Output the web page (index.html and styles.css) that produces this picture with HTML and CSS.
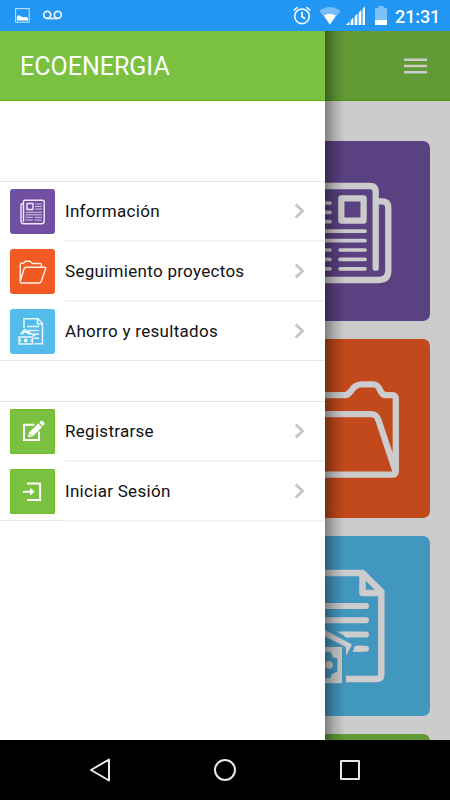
FILE: index.html
```html
<!DOCTYPE html>
<html lang="es">
<head>
<meta charset="utf-8">
<title>Ecoenergia</title>
<link rel="stylesheet" href="styles.css">
</head>
<body>
<div class="phone">
  <div class="status">
    <svg class="status-left" width="70" height="31" fill="none" stroke="#e6f3fe">
      <rect x="15.600" y="8.600" width="13.600" height="13.600" stroke="#b5dbfb" stroke-width="1.200"/>
      <path d="M17 20.500v-4l2-1.500 2 1.500 3 1 2-.8 2 1.500v2.300z" fill="#fff" stroke="none"/>
      <g stroke-width="1.700"><circle cx="47.200" cy="14.800" r="3.500"/><circle cx="57.800" cy="14.800" r="3.500"/><path d="M47 18.500h11"/></g>
    </svg>
    <svg class="status-right" width="100" height="31">
      <g fill="none" stroke="#fff" stroke-width="1.600"><circle cx="12" cy="16.300" r="7.300"/><path d="M12 11.800v5l3.200 2M3.600 10.500l4-3.300M20.400 10.500l-4-3.300"/></g>
      <path d="M29.200 11Q39.800 2.800 50.600 11L39.900 24.500z" fill="#74bdf9"/>
      <path d="M34 15.500Q39.900 12 45.800 15.500L39.900 24.500z" fill="#fff"/>
      <path d="M56 25L75 6.500V25z" fill="#79bff9"/>
      <path d="M56 25l3-3v3zM61 25v-5l2-2v7zM65 25v-9l2-2v11zM69 25V12.500l2-2V25zM73 25V8.500l2-2V25z" fill="#fff"/>
      <path d="M85 8h3.500V6h5v2H97v17H85z" fill="#7dc1f9"/>
      <path d="M85 20h12v5H85z" fill="#fff"/>
    </svg>
    <span class="clock">21:31</span>
  </div>

  <div class="app">
    <aside class="drawer">
      <header class="drawer-head">ECOENERGIA</header>
      <nav class="menu">
        <ul class="group">
          <li class="item">
            <span class="tile purple"><svg viewBox="0 0 45 45" fill="none" stroke="#eee9f5" stroke-width="1.400" stroke-linecap="round" stroke-linejoin="round"><path d="M13.500 32.200V12.800q0-1.500 1.500-1.500h17.500q1.700 0 1.700 1.500V32q0 2.700-2.700 2.700H14q-3 0-3-3V16q0-1.500 2.500-1.500"/><path d="M17 14.500h6v6h-6z"/><path stroke-width=".8" d="M25.500 15h6M25.500 17.500h6M25.500 20h6M16 23.300h15.500M16 25.800h15.500M16 28.300h6.500M25 28.300h6.500M16 31h6.500M25 31h6.500"/></svg></span>
            <span class="label">Información</span><svg class="chev" viewBox="0 0 12 16"><path d="M1.700 1.500L8.500 8l-6.800 6.500"/></svg>
          </li>
          <li class="item">
            <span class="tile orange"><svg viewBox="0 0 45 45" fill="none" stroke="#fff0e8" stroke-width="1.400" stroke-linejoin="round"><path d="M10.200 32V15.500q0-1.200 1.200-1.200h1.800c1.300 0 1-2 3-2h3c2 0 2 2.200 3.500 2.200h7.500q1.200 0 1.200 1.200v2.500M10.200 32.300l3.700-12.300q.6-1.800 2.500-1.800h18.200q1.500 0 1 1.500l-4.300 12.600q-.6 1.700-2.300 1.700H11.400q-1.500 0-1.200-1.700z"/></svg></span>
            <span class="label">Seguimiento proyectos</span><svg class="chev" viewBox="0 0 12 16"><path d="M1.700 1.500L8.500 8l-6.800 6.500"/></svg>
          </li>
          <li class="item">
            <span class="tile blue"><svg viewBox="0 0 45 45" fill="none" stroke="#e7f6fd" stroke-width="1.500"><path d="M14 19V9.800h14l4.500 4.700v20.300h-8M27.500 10v5h5M17 17.500h12M18 21.500h11M21 25.300h8M24 29.200h5"/><path d="M10.500 25.500l4-5L25 27M12.500 25l2.700-2.500 4.500 3"/><path d="M9 28h13.500v7H9z"/><circle cx="15.700" cy="31.500" r="2" fill="#e7f6fd" stroke="none"/><path d="M10.500 30v3M21 30v3" stroke-width="1"/></svg></span>
            <span class="label">Ahorro y resultados</span><svg class="chev" viewBox="0 0 12 16"><path d="M1.700 1.500L8.500 8l-6.800 6.500"/></svg>
          </li>
        </ul>
        <ul class="group">
          <li class="item">
            <span class="tile green"><svg viewBox="0 0 45 45"><path d="M24.500 15.800H14V31h15v-8.500" fill="none" stroke="#fff" stroke-width="2"/><path d="M18 28.300l1-4.800 9.300-8.900 3.700 3.700-9.200 9zM29.200 13.700l1.700-1.600q.8-.7 1.600 0l1.900 1.900q.8.800 0 1.600l-1.600 1.700z" fill="#fff"/><path d="M19.500 25l1.700 1.700" stroke="#7ac142"/></svg></span>
            <span class="label">Registrarse</span><svg class="chev" viewBox="0 0 12 16"><path d="M1.700 1.500L8.500 8l-6.800 6.500"/></svg>
          </li>
          <li class="item">
            <span class="tile green"><svg viewBox="0 0 45 45"><path d="M17 14.400h13.100v16.700H17M13 22.700h8" fill="none" stroke="#fff" stroke-width="2"/><path d="M20 18.800l4.700 3.900-4.700 3.900z" fill="#fff"/></svg></span>
            <span class="label">Iniciar Sesión</span><svg class="chev" viewBox="0 0 12 16"><path d="M1.700 1.500L8.500 8l-6.800 6.500"/></svg>
          </li>
        </ul>
      </nav>
    </aside>

    <main class="page">
      <header class="page-head"><svg width="23" height="16" fill="#ccc"><path d="M0 .5h23v2.500H0zM0 6.800h23v2.500H0zM0 13h23v2.500H0z"/></svg></header>
      <div class="cards">
        <div class="card c-purple"><svg viewBox="325 141 105 180" fill="none" stroke="#ccc" stroke-width="6.300" stroke-linecap="round"><path d="M320 186h50q5.700 0 5.700 5.700v76M376 201.300h6q6.300 0 6.300 6.300v63q0 9.400-9.400 9.400H320"/><path stroke-linejoin="round" d="M341.300 198.300h22.300v22.300h-22.300z"/><path stroke-width="3.700" d="M320 203h10M320 212.300h10M320 221.700h10M320 231.200h45M320 240.700h45M320 250h10M340 250h25M320 259.400h10M340 259.400h25M320 268.800h10M340 268.800h25"/></svg></div>
        <div class="card c-orange"><svg viewBox="325 339 105 180" fill="none" stroke="#ccc" stroke-width="6.300" stroke-linejoin="round"><path d="M320 395.200h25c7 0 6-10.900 17-10.900h11c9 0 5 10.900 13 10.900h6q3.800 0 3.800 3.800v72q0 3.700-3.700 3.700H320M320 414.200h51q5.500 0 7.300 5.500l17.400 52"/></svg></div>
        <div class="card c-blue"><svg viewBox="325 536.400 105 180" fill="none" stroke="#ccc" stroke-width="6.500"><path d="M320 573.400h42.500L381.300 592v83q0 4.500-4.500 4.500H346"/><path stroke-linejoin="round" d="M362.500 573v20.500H381"/><path stroke-linecap="round" stroke-width="6" d="M320 606.400h46M320 620.700h46M347 635h19M357 649.200h9"/><path fill="#ccc" stroke="none" d="M336.500 632h12v6h-1zM352.500 652.200l3-6h6v6zM325 630.500l27 14.500-6 11.500v-9l-21-10.500z"/><path fill="#ccc" stroke="none" fill-rule="evenodd" d="M325 647.300h17v36.400h-17v-5.200l5.500.2 1-4 5.800-2.500v-13.500l-4.500-1-2-5-5.800-.7z"/><circle cx="329" cy="665.300" r="3.800" fill="#ccc" stroke="none"/></svg></div>
        <div class="card c-green"></div>
      </div>
      <div class="shade"></div>
    </main>
  </div>

  <footer class="navbar">
    <svg width="450" height="60" fill="none" stroke="#e8e8e8" stroke-width="2" stroke-linejoin="round"><path d="M91 30l18-10.500v21z"/><circle cx="225" cy="30" r="10"/><path d="M341 21h18v18h-18z"/></svg>
  </footer>
</div>
</body>
</html>
```
FILE: styles.css
```css
* { box-sizing: border-box; }
body { margin: 0; font-family: Roboto, "Liberation Sans", sans-serif; }
svg { display: block; }
.phone { width: 450px; height: 800px; display: flex; flex-direction: column; overflow: hidden; background: #fff; }

.status { height: 31px; flex: none; display: flex; align-items: center; background: #2196f3; color: #fff; }
.status-right { margin-left: 220px; }
.clock { margin-left: 5px; padding-top: 3px; font-size: 18px; font-weight: 500; line-height: 28px; letter-spacing: -.1px; white-space: nowrap; }

.app { height: 709px; flex: none; display: flex; }
.drawer { width: 325px; flex: none; background: #fff; }
.drawer-head { height: 70px; padding-left: 20px; background: #7ac142; border-bottom: 1px solid #5fb50a; color: #fff; font-size: 25px; line-height: 72px; }
.menu { padding-top: 80px; }
.group { list-style: none; margin: 0 0 40px; padding: 0; box-shadow: inset 0 1px #e4e4e6, inset 0 -1px #e8e8ea; }
.item { height: 60px; padding: 0 20px 0 10px; display: flex; align-items: center; position: relative; color: #111; font-size: 17px; }
.item::after { content: ""; position: absolute; left: 65px; right: 0; bottom: -1px; height: 2px; background: #f2f2f4; }
.group:first-child .item:last-child::after { display: none; }
.tile { width: 45px; height: 45px; flex: none; border-radius: 2px; transform: translateY(.5px); }
.item .tile { transform: none; margin-bottom: -1px; align-self: flex-start; margin-top: 8px; }
.tile svg { width: 45px; height: 45px; }
.purple { background: #7150a3; border-radius: 3px; }
.orange { background: #f15a22; border-radius: 3px; }
.blue { background: #53bcea; border-radius: 3px; }
.green { background: #7ac142; box-shadow: inset 0 0 0 1px #70bf22; }
.label { margin-left: 10px; flex: 1; letter-spacing: .29px; white-space: nowrap; }
.chev { width: 12px; height: 16px; fill: none; stroke: #c7c7cc; stroke-width: 3; margin-right: -1px; }

.page { width: 125px; position: relative; background: #ccc; overflow: hidden; }
.page-head { height: 70px; background: #629b35; border-bottom: 1px solid #4e9508; display: flex; justify-content: flex-end; align-items: center; padding: 1px 23px 0 0; }
.cards { padding: 40px 20px 0 0; display: flex; flex-direction: column; gap: 18px; }
.card { height: 179.600px; flex: none; border-radius: 0 7px 7px 0; overflow: hidden; }
.card svg { width: 105px; height: 180px; }
.c-purple { background: #5a4182; }
.c-orange { background: #c1491b; }
.c-blue { background: #4297bf; }
.c-green { background: #629b35; }
.shade { position: absolute; left: 0; top: 0; width: 20px; height: 100%; background: linear-gradient(to right, rgba(0,0,0,.38), rgba(0,0,0,.16) 45%, rgba(0,0,0,0)); }

.navbar { height: 60px; flex: none; background: #000; }
```
